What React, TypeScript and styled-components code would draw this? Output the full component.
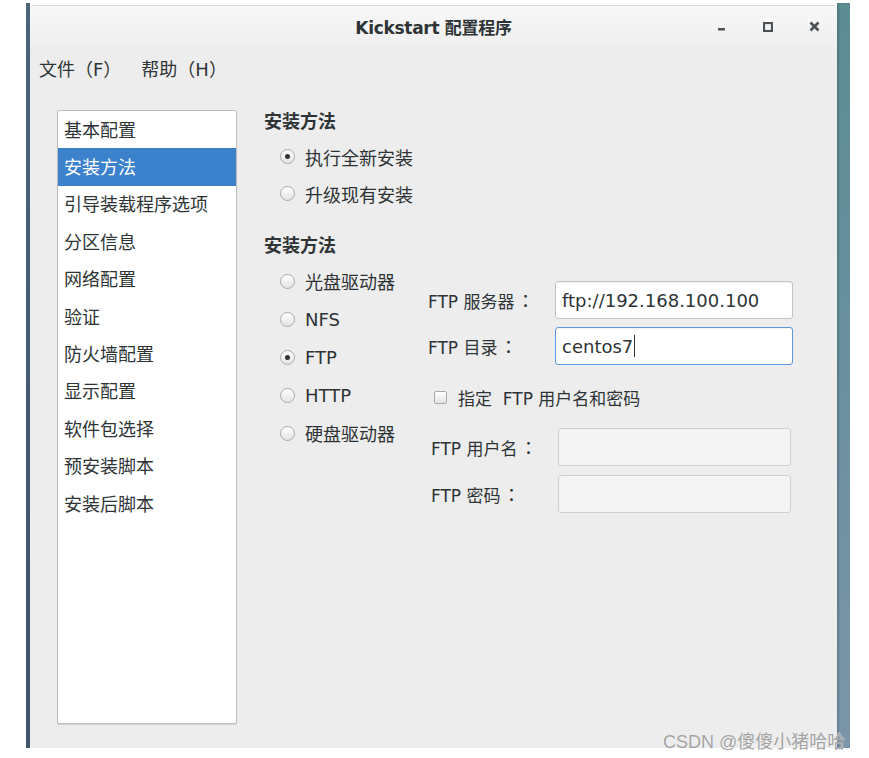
import React from "react";
import styled, { createGlobalStyle, css } from "styled-components";

const Global = createGlobalStyle`
  html, body { margin: 0; padding: 0; background: #ffffff; }
  body {
    font-family: "DejaVu Sans", "Noto Sans CJK SC", sans-serif;
    font-size: 18px;
    color: #2e3436;
  }
  * { box-sizing: border-box; }
`;

const Page = styled.div`
  position: relative;
  width: 869px;
  height: 758px;
  padding: 3px 0 0 26px;
`;

const Desktop = styled.div`
  display: flex;
  width: 824px;
  height: 745px;
`;

const LeftEdge = styled.div`
  width: 4px;
  background: linear-gradient(to bottom, #4a6478, #3e5468);
`;

const RightEdge = styled.div`
  flex: 1;
  background: linear-gradient(to bottom, #5c8d92 0%, #6a90a0 50%, #7b96aa 100%);
  box-shadow: inset 2px 0 2px rgba(0, 0, 0, 0.15);
`;

const Window = styled.div`
  width: 807px;
  margin-top: 2px;
  display: flex;
  flex-direction: column;
  background: #ededed;
  border-radius: 5px 5px 0 0;
  border-top: 1px solid #d6d6d6;
  overflow: hidden;
`;

const TitleBar = styled.div`
  position: relative;
  height: 41px;
  display: flex;
  align-items: center;
  justify-content: center;
  background: linear-gradient(to bottom, #f8f8f8, #efefef);
`;

const Title = styled.div`
  font-size: 17px;
  font-weight: bold;
  color: #2e3436;
  letter-spacing: -0.3px;
`;

const WinButtons = styled.div`
  position: absolute;
  right: 0;
  top: 0;
  height: 41px;
  display: flex;
  align-items: center;
`;

const WinButton = styled.div`
  width: 46px;
  height: 30px;
  display: flex;
  align-items: center;
  justify-content: center;
`;

const MenuBar = styled.div`
  height: 41px;
  display: flex;
  align-items: center;
  padding-left: 9px;
  gap: 20px;
`;

const MenuItem = styled.div`
  font-size: 18px;
  color: #2e3436;
`;

const Content = styled.div`
  flex: 1;
  display: flex;
  padding: 22px 0 24px 27px;
  gap: 27px;
`;

const Sidebar = styled.div`
  width: 180px;
  height: 614px;
  background: #ffffff;
  border: 1px solid #bdbdbd;
  box-shadow: 0 1px 1px rgba(0, 0, 0, 0.12);
  border-radius: 2px;
`;

const SideItem = styled.div<{ $selected?: boolean }>`
  height: 37.4px;
  display: flex;
  align-items: center;
  padding: 0 0 2px 6px;
  font-size: 18px;
  color: #2e3436;
  ${(p) =>
    p.$selected &&
    css`
      background: #3b81cc;
      color: #ffffff;
    `}
`;

const Panel = styled.div`
  display: flex;
  flex-direction: column;
`;

const Heading = styled.div<{ $gap?: number }>`
  height: 24px;
  line-height: 24px;
  font-weight: bold;
  font-size: 18px;
  margin-top: ${(p) => p.$gap ?? 0}px;
`;

const RadioGroup = styled.div`
  margin-top: 4px;
  padding-left: 16px;
  display: flex;
  flex-direction: column;
`;

const RadioRow = styled.div<{ $h: number }>`
  height: ${(p) => p.$h}px;
  display: flex;
  align-items: center;
  gap: 10px;
`;

const Radio = styled.span<{ $checked?: boolean }>`
  position: relative;
  width: 15px;
  height: 15px;
  border-radius: 50%;
  border: 1px solid #a9a9a9;
  background: linear-gradient(to bottom, #ffffff, #e3e3e3);
  flex: none;
  ${(p) =>
    p.$checked &&
    css`
      &::after {
        content: "";
        position: absolute;
        left: 4px;
        top: 4px;
        width: 5px;
        height: 5px;
        border-radius: 50%;
        background: #2e3436;
      }
    `}
`;

const MethodArea = styled.div`
  display: flex;
  margin-top: 4px;
`;

const MethodList = styled.div`
  width: 164px;
  padding-left: 16px;
  display: flex;
  flex-direction: column;
`;

const Form = styled.div`
  padding-top: 19px;
  display: flex;
  flex-direction: column;
`;

const FieldRow = styled.div<{ $indent?: number; $top?: number }>`
  display: flex;
  align-items: center;
  margin-top: ${(p) => p.$top ?? 0}px;
  padding-left: ${(p) => p.$indent ?? 0}px;
`;

const FieldLabel = styled.div<{ $w: number }>`
  width: ${(p) => p.$w}px;
  font-size: 17px;
  white-space: nowrap;
`;

const Colon = styled.span`
  font-family: "Noto Sans CJK JP", "Noto Sans CJK TC", sans-serif;
  font-size: 18px;
  margin-left: 2px;
`;

const Input = styled.div<{ $w: number; $state?: "normal" | "focus" | "disabled" }>`
  width: ${(p) => p.$w}px;
  height: 38px;
  border-radius: 3px;
  display: flex;
  align-items: center;
  padding-left: 6px;
  font-size: 18px;
  color: #2e3436;
  background: #ffffff;
  border: 1px solid #c4c4c4;
  box-shadow: inset 0 1px 1px rgba(0, 0, 0, 0.06);
  ${(p) =>
    p.$state === "focus" &&
    css`
      border-color: #5a9be0;
    `}
  ${(p) =>
    p.$state === "disabled" &&
    css`
      background: #f4f4f4;
      border-color: #cfcfcf;
      box-shadow: none;
    `}
`;

const Caret = styled.span`
  display: inline-block;
  width: 1px;
  height: 22px;
  background: #2e3436;
  margin-left: 1px;
`;

const CheckRow = styled.div`
  height: 38px;
  margin-top: 13px;
  padding-left: 6px;
  display: flex;
  align-items: center;
  gap: 11px;
  white-space: pre;
  font-size: 17px;
`;

const CheckBox = styled.span`
  width: 13px;
  height: 13px;
  border-radius: 2px;
  border: 1px solid #a9a9a9;
  background: linear-gradient(to bottom, #ffffff, #e3e3e3);
  flex: none;
`;

const Watermark = styled.div`
  position: absolute;
  left: 663px;
  top: 727px;
  font-family: "Liberation Sans", "Noto Sans CJK SC", sans-serif;
  font-size: 18px;
  color: #a3a3a3;
  text-shadow: 0 0 1px #ffffff;
  white-space: nowrap;
`;

const sideItems = [
  "基本配置",
  "安装方法",
  "引导装载程序选项",
  "分区信息",
  "网络配置",
  "验证",
  "防火墙配置",
  "显示配置",
  "软件包选择",
  "预安装脚本",
  "安装后脚本",
];

const methods = [
  { label: "光盘驱动器", checked: false },
  { label: "NFS", checked: false },
  { label: "FTP", checked: true },
  { label: "HTTP", checked: false },
  { label: "硬盘驱动器", checked: false },
];

export default function App() {
  return (
    <>
      <Global />
      <Page>
        <Desktop>
          <LeftEdge />
          <Window>
            <TitleBar>
              <Title>Kickstart 配置程序</Title>
              <WinButtons>
                <WinButton>
                  <svg width="8" height="8" viewBox="0 0 8 8">
                    <rect x="0" y="5" width="7" height="2.5" fill="#4c5356" />
                  </svg>
                </WinButton>
                <WinButton>
                  <svg width="10" height="10" viewBox="0 0 10 10">
                    <rect x="1" y="1" width="8" height="8" fill="none" stroke="#4c5356" strokeWidth="2.2" />
                  </svg>
                </WinButton>
                <WinButton>
                  <svg width="11" height="11" viewBox="0 0 11 11">
                    <path d="M1.5 1.5 L9.5 9.5 M9.5 1.5 L1.5 9.5" stroke="#4c5356" strokeWidth="2.6" />
                  </svg>
                </WinButton>
              </WinButtons>
            </TitleBar>
            <MenuBar>
              <MenuItem>文件（F）</MenuItem>
              <MenuItem>帮助（H）</MenuItem>
            </MenuBar>
            <Content>
              <Sidebar>
                {sideItems.map((s, i) => (
                  <SideItem key={s} $selected={i === 1}>
                    {s}
                  </SideItem>
                ))}
              </Sidebar>
              <Panel>
                <Heading>安装方法</Heading>
                <RadioGroup>
                  <RadioRow $h={37}>
                    <Radio $checked />
                    <span>执行全新安装</span>
                  </RadioRow>
                  <RadioRow $h={37}>
                    <Radio />
                    <span>升级现有安装</span>
                  </RadioRow>
                </RadioGroup>
                <Heading $gap={22}>安装方法</Heading>
                <MethodArea>
                  <MethodList>
                    {methods.map((m) => (
                      <RadioRow key={m.label} $h={38}>
                        <Radio $checked={m.checked} />
                        <span>{m.label}</span>
                      </RadioRow>
                    ))}
                  </MethodList>
                  <Form>
                    <FieldRow>
                      <FieldLabel $w={127}>
                        FTP 服务器<Colon>：</Colon>
                      </FieldLabel>
                      <Input $w={238} $state="normal">ftp://192.168.100.100</Input>
                    </FieldRow>
                    <FieldRow $top={8}>
                      <FieldLabel $w={127}>
                        FTP 目录<Colon>：</Colon>
                      </FieldLabel>
                      <Input $w={238} $state="focus">
                        centos7
                        <Caret />
                      </Input>
                    </FieldRow>
                    <CheckRow>
                      <CheckBox />
                      <span>指定  FTP 用户名和密码</span>
                    </CheckRow>
                    <FieldRow $top={12} $indent={3}>
                      <FieldLabel $w={127}>
                        FTP 用户名<Colon>：</Colon>
                      </FieldLabel>
                      <Input $w={233} $state="disabled" />
                    </FieldRow>
                    <FieldRow $top={9} $indent={3}>
                      <FieldLabel $w={127}>
                        FTP 密码<Colon>：</Colon>
                      </FieldLabel>
                      <Input $w={233} $state="disabled" />
                    </FieldRow>
                  </Form>
                </MethodArea>
              </Panel>
            </Content>
          </Window>
          <RightEdge />
        </Desktop>
        <Watermark>CSDN @傻傻小猪哈哈</Watermark>
      </Page>
    </>
  );
}
